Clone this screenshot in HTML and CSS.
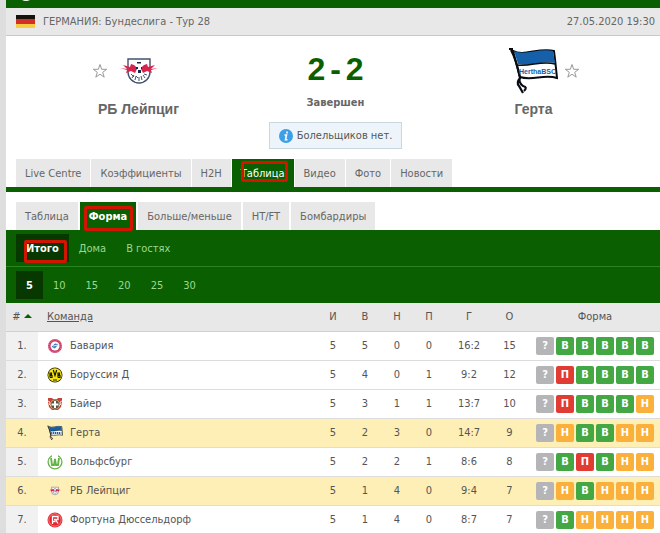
FILE: index.html
```html
<!DOCTYPE html>
<html lang="ru">
<head>
<meta charset="utf-8">
<title>РБ Лейпциг - Герта</title>
<link rel="stylesheet" href="styles.css">
</head>
<body>
<svg class="defs" aria-hidden="true">
  <symbol id="star" viewBox="0 0 16 16"><path d="M8 1.5l1.7 4.8h5l-4 3 1.5 4.9L8 11.2l-4.2 3 1.5-4.9-4-3h5z" fill="#fff" stroke="#999" stroke-width="1"/></symbol>
  <symbol id="hertha" viewBox="0 0 50 48">
    <path d="M5 4C16 10 31 0 46 4L47 12 49 31C36 27 24 34 12 30Z" fill="#fff" stroke="#080c12" stroke-width="2"/>
    <path d="M6 4C17 9 31 1 45 4L47 16C34 13 22 20 10 17Z" fill="#1560a8"/>
    <path d="M9 18C22 20 34 13 47 17" fill="none" stroke="#080c12" stroke-width="1.5"/>
    <path d="M3 3Q8 12 12 31Q8 36 11 39L15 46M12 31Q10 35 15 39Q20 40 16 44M1 2h4" fill="none" stroke="#080c12" stroke-width="2.2"/>
  </symbol>
  <symbol id="leipzig" viewBox="0 0 38 26">
    <path d="M8 1H30V14A11 11 0 0 1 8 14Z" fill="#fff" stroke="#43516c" stroke-width="1.4"/>
    <path d="M0 10L7 11 3 7 10 9 11 6Q16 7 17 11L15 15 11 13 6 15 7 12ZM38 10L31 11 35 7 28 9 27 6Q22 7 21 11L23 15 27 13 32 15 31 12Z" fill="#d92450"/>
    <path d="M17 4h4v1.500h-4zM18 12h3v3h-3zM16 9h2v2h-2zM21 9h1v2h-1z" fill="#182848"/>
    <path d="M11 16l3 3M12 20l2-3M15 22l1-4 2 2M19 23v-4M22 22l-1-4M25 20l-2-3M27 17l-3-1" stroke="#43516c" stroke-width="1" fill="none"/>
  </symbol>
  <symbol id="bayern" viewBox="0 0 16 16"><circle cx="8" cy="8" r="7" fill="#cf3560"/><circle cx="8" cy="8" r="6.200" fill="none" stroke="#edb0c4" stroke-width=".8" stroke-dasharray="1 1"/><circle cx="8" cy="8" r="4.500" fill="#fff"/><path d="M4 9l4-4 4 1-4 5zM6 8l5-1" fill="#3e84bd" stroke="#fff" stroke-width=".8"/></symbol>
  <symbol id="bvb" viewBox="0 0 16 16"><circle cx="8" cy="8" r="7.500" fill="#1b1b00"/><circle cx="8" cy="8" r="6.800" fill="#f5e611"/><path d="M3 5.500v5M3 6h1.500v1.800H3M3 8.500h2v2H3M11 5.500v5M11 6h1.500v1.800H11M11 8.500h2v2h-2M6.300 3L8 8.500 9.700 3M6 13h4" fill="none" stroke="#181800" stroke-width="1.200"/></symbol>
  <symbol id="bayer" viewBox="0 0 16 16"><path d="M1 2h4l1 1h4l1-1h4v4l-1 5-3 3H5l-3-3-1-5z" fill="#c8403a"/><circle cx="8" cy="8.500" r="5" fill="#d0b56b"/><circle cx="8" cy="8.500" r="4.200" fill="#57534c"/><path d="M8 5v7M4.500 8.500h7" stroke="#fff" stroke-width="2"/><path d="M1 5l2 1-1 2 2 2M15 5l-2 1 1 2-2 2" fill="none" stroke="#f1d3c9"/></symbol>
  <symbol id="wolfsburg" viewBox="0 0 16 16"><circle cx="8" cy="8" r="6.900" fill="#fff" stroke="#63b243" stroke-width="1.300"/><path d="M8 0v4" stroke="#fff" stroke-width="6"/><path d="M4 4l1 7h2l1-6 1 6h2l1-7" fill="none" stroke="#63b243" stroke-width="1.800"/></symbol>
  <symbol id="fortuna" viewBox="0 0 16 16"><circle cx="8" cy="8" r="7.500" fill="#e3262e"/><circle cx="8" cy="8" r="6.200" fill="none" stroke="#f7b5b5" stroke-width=".6"/><path d="M5.500 12V4.500H11V7.500H7M5.500 9.500H8.500M8.500 7.500L11 11.500" fill="none" stroke="#fff" stroke-width="1.300"/></symbol>
</svg>
<div class="page">
  <div class="topbar"><span class="ball"></span></div>
  <header class="event">
    <div class="league"><span class="flag"></span><span>ГЕРМАНИЯ: Бундеслига - Тур 28</span></div>
    <time datetime="2020-05-27T19:30">27.05.2020 19:30</time>
  </header>

  <section class="match">
    <div class="team home">
      <div class="crest"><button class="fav" aria-label="В избранное"><svg><use href="#star"/></svg></button><svg class="leipzig"><use href="#leipzig"/></svg></div>
      <h2>РБ Лейпциг</h2>
    </div>
    <div class="result">
      <div class="score"><span>2</span><span>-</span><span>2</span></div>
      <div class="status">Завершен</div>
      <div class="info"><svg viewBox="0 0 14 14"><circle cx="7" cy="7" r="7" fill="#3c9fe8"/><path d="M8 2.500v2M5.500 6H7.500L6.500 10.800H8.500" fill="none" stroke="#fff" stroke-width="1.600"/></svg><span>Болельщиков нет.</span></div>
    </div>
    <div class="team away">
      <div class="crest"><svg class="hertha" viewBox="0 0 50 48"><use href="#hertha"/><text x="11" y="27">HerthaBSC</text></svg><button class="fav" aria-label="В избранное"><svg><use href="#star"/></svg></button></div>
      <h2>Герта</h2>
    </div>
  </section>

  <nav class="tabs main-tabs">
    <a href="#">Live Centre</a><a href="#">Коэффициенты</a><a href="#">H2H</a><a href="#" class="active">Таблица<i class="mark mark-table"></i></a><a href="#">Видео</a><a href="#">Фото</a><a href="#">Новости</a>
  </nav>
  <nav class="tabs sub-tabs">
    <a href="#">Таблица</a><a href="#" class="active">Форма<i class="mark mark-form"></i></a><a href="#">Больше/меньше</a><a href="#">HT/FT</a><a href="#">Бомбардиры</a>
  </nav>
  <div class="filters">
    <nav class="places"><a href="#" class="active">Итого<i class="mark mark-total"></i></a><a href="#">Дома</a><a href="#">В гостях</a></nav>
    <nav class="counts"><a href="#" class="active">5</a><a href="#">10</a><a href="#">15</a><a href="#">20</a><a href="#">25</a><a href="#">30</a></nav>
  </div>

  <table class="standings">
    <thead><tr><th class="rank"># <i class="sort"></i></th><th class="club"><a href="#">Команда</a></th><th class="num">И</th><th class="num">В</th><th class="num">Н</th><th class="num">П</th><th class="goals">Г</th><th class="points">О</th><th class="form">Форма</th></tr></thead>
    <tbody>
      <tr><td class="rank">1.</td><td class="club"><div><svg><use href="#bayern"/></svg>Бавария</div></td><td>5</td><td>5</td><td>0</td><td>0</td><td>16:2</td><td>15</td><td class="form"><div><b>?</b><b class="w">В</b><b class="w">В</b><b class="w">В</b><b class="w">В</b><b class="w">В</b></div></td></tr>
      <tr><td class="rank">2.</td><td class="club"><div><svg><use href="#bvb"/></svg>Боруссия Д</div></td><td>5</td><td>4</td><td>0</td><td>1</td><td>9:2</td><td>12</td><td class="form"><div><b>?</b><b class="l">П</b><b class="w">В</b><b class="w">В</b><b class="w">В</b><b class="w">В</b></div></td></tr>
      <tr><td class="rank">3.</td><td class="club"><div><svg><use href="#bayer"/></svg>Байер</div></td><td>5</td><td>3</td><td>1</td><td>1</td><td>13:7</td><td>10</td><td class="form"><div><b>?</b><b class="l">П</b><b class="w">В</b><b class="w">В</b><b class="w">В</b><b class="d">Н</b></div></td></tr>
      <tr class="current"><td class="rank">4.</td><td class="club"><div><svg viewBox="0 0 50 48"><use href="#hertha"/><path d="M13 24h32" stroke="#1560a8" stroke-width="6" stroke-dasharray="4 2"/></svg>Герта</div></td><td>5</td><td>2</td><td>3</td><td>0</td><td>14:7</td><td>9</td><td class="form"><div><b>?</b><b class="d">Н</b><b class="w">В</b><b class="w">В</b><b class="d">Н</b><b class="d">Н</b></div></td></tr>
      <tr><td class="rank">5.</td><td class="club"><div><svg><use href="#wolfsburg"/></svg>Вольфсбург</div></td><td>5</td><td>2</td><td>2</td><td>1</td><td>8:6</td><td>8</td><td class="form"><div><b>?</b><b class="w">В</b><b class="l">П</b><b class="w">В</b><b class="d">Н</b><b class="d">Н</b></div></td></tr>
      <tr class="current"><td class="rank">6.</td><td class="club"><div><svg class="tiny"><use href="#leipzig"/></svg>РБ Лейпциг</div></td><td>5</td><td>1</td><td>4</td><td>0</td><td>9:4</td><td>7</td><td class="form"><div><b>?</b><b class="d">Н</b><b class="w">В</b><b class="d">Н</b><b class="d">Н</b><b class="d">Н</b></div></td></tr>
      <tr><td class="rank">7.</td><td class="club"><div><svg><use href="#fortuna"/></svg>Фортуна Дюссельдорф</div></td><td>5</td><td>1</td><td>4</td><td>0</td><td>8:7</td><td>7</td><td class="form"><div><b>?</b><b class="w">В</b><b class="d">Н</b><b class="d">Н</b><b class="d">Н</b><b class="d">Н</b></div></td></tr>
    </tbody>
  </table>
</div>
</body>
</html>
```
FILE: styles.css
```css
* { box-sizing: border-box; }
body {
  margin: 0;
  background: #dedede;
  color: #555;
  font: 11px/16px "DejaVu Sans Condensed", "DejaVu Sans", sans-serif;
}
a { color: inherit; text-decoration: none; }
.defs { position: absolute; width: 0; height: 0; }
.page { margin-left: 6px; background: #fff; }

.topbar { height: 8px; background: #0a5f00; overflow: hidden; }
.ball { display: block; width: 16px; height: 16px; margin: -15px 0 0 12px; border-radius: 50%; background: #fff; }
.event {
  display: flex;
  justify-content: space-between;
  align-items: center;
  height: 28px;
  padding: 0 5px 0 10px;
  background: #e8e8e8;
  border-bottom: 1px solid #c8c8c8;
  color: #666;
}
.league { display: flex; align-items: center; gap: 8px; }
.flag { width: 19px; height: 13px; background: linear-gradient(#171210 0 4px, #d22f27 4px 9px, #f7cc45 9px); }

.match { display: grid; grid-template-columns: minmax(0, 1fr) 136px minmax(0, 1fr); height: 123px; }
.team { text-align: center; }
.crest { display: flex; align-items: center; height: 48px; margin-top: 11px; }
.home .crest { justify-content: flex-end; padding-right: 107px; gap: 12px; }
.away .crest { padding-left: 107px; gap: 6px; }
.fav { width: 16px; height: 16px; padding: 0; border: 0; background: none; }
.fav svg { display: block; width: 16px; height: 16px; }
.leipzig { width: 38px; height: 26px; }
.hertha { width: 50px; height: 48px; }
.hertha text { font: bold 7px "Liberation Sans", Arial, sans-serif; fill: #1560a8; }
.team h2 { margin: 5px 0 0; padding-left: 6px; font: bold 14px/18px "Liberation Sans", Arial, sans-serif; color: #666; }
.result { display: flex; flex-direction: column; align-items: center; padding-left: 5px; }
.score {
  display: flex;
  gap: 5px;
  margin-top: 15px;
  font: bold 32px/36px "Liberation Sans", Arial, sans-serif;
  color: #0a5f00;
}
.status { margin-top: 8px; font-weight: bold; color: #666; }
.info {
  display: flex;
  align-items: center;
  gap: 4px;
  height: 27px;
  margin-top: 11px;
  padding: 0 9px;
  border: 1px solid #cbd7df;
  background: #edf5fa;
  white-space: nowrap;
}
.info svg { width: 14px; height: 14px; }

.tabs { display: flex; gap: 1px; padding-left: 10px; }
.tabs a { position: relative; height: 28px; padding: 0 9px; background: #e8e8e8; color: #666; line-height: 30px; white-space: nowrap; }
.tabs .active { background: #0a5f00; color: #fff; }
.main-tabs { border-bottom: 5px solid #0a5f00; }
.sub-tabs { gap: 2px; margin-top: 10px; }
.sub-tabs .active { font-weight: bold; }
.mark { position: absolute; border: 3px solid #d01500; border-radius: 2px; }
.mark-table { inset: 2px 6px 5px 9px; }
.mark-form { inset: 4px 3px -1px 4px; }
.mark-total { inset: 6px 2px -1px 8px; }

.filters { background: #0a5f00; color: #9bd890; }
.filters nav { display: flex; padding: 4px 10px; }
.filters a { position: relative; height: 28px; padding: 0 10px; line-height: 30px; }
.filters .active { background: #063800; color: #fff; font-weight: bold; }
.places { border-bottom: 1px solid #2a8520; }

.standings { width: 100%; border-collapse: separate; border-spacing: 0; table-layout: fixed; text-align: center; }
.standings th { height: 29px; padding: 0; background: #e8e8e8; border-bottom: 1px solid #d0d0d0; font-weight: normal; }
.standings td { height: 29px; padding: 0; border-bottom: 1px solid #dcdcdc; }
.standings .rank { width: 32px; }
.standings td.rank { background: #f1f1f1; }
.standings .club { text-align: left; padding-left: 9px; }
.standings th.club a { text-decoration: underline; }
.club div { display: flex; align-items: center; gap: 7px; }
.club svg { width: 16px; height: 16px; }
.club .tiny { padding: 2px; }
.num { width: 32px; }
.goals { width: 48px; }
.points { width: 33px; }
.standings .form { width: 134px; padding-left: 4px; }
.form div { display: flex; justify-content: center; gap: 2px; }
.form b { width: 18px; height: 18px; border-radius: 2px; background: #b5b5b8; color: #fff; line-height: 18px; }
.form .w { background: #43a843; }
.form .l { background: #e13c34; }
.form .d { background: #fbb03b; }
.sort { display: inline-block; border: 4px solid transparent; border-top: 0; border-bottom-color: #0a5f00; vertical-align: 2px; }
.standings .current td { background: #fdefb6; border-bottom-color: #f0dfa0; }
.standings .current .rank { background: #fdefb6; }
```
